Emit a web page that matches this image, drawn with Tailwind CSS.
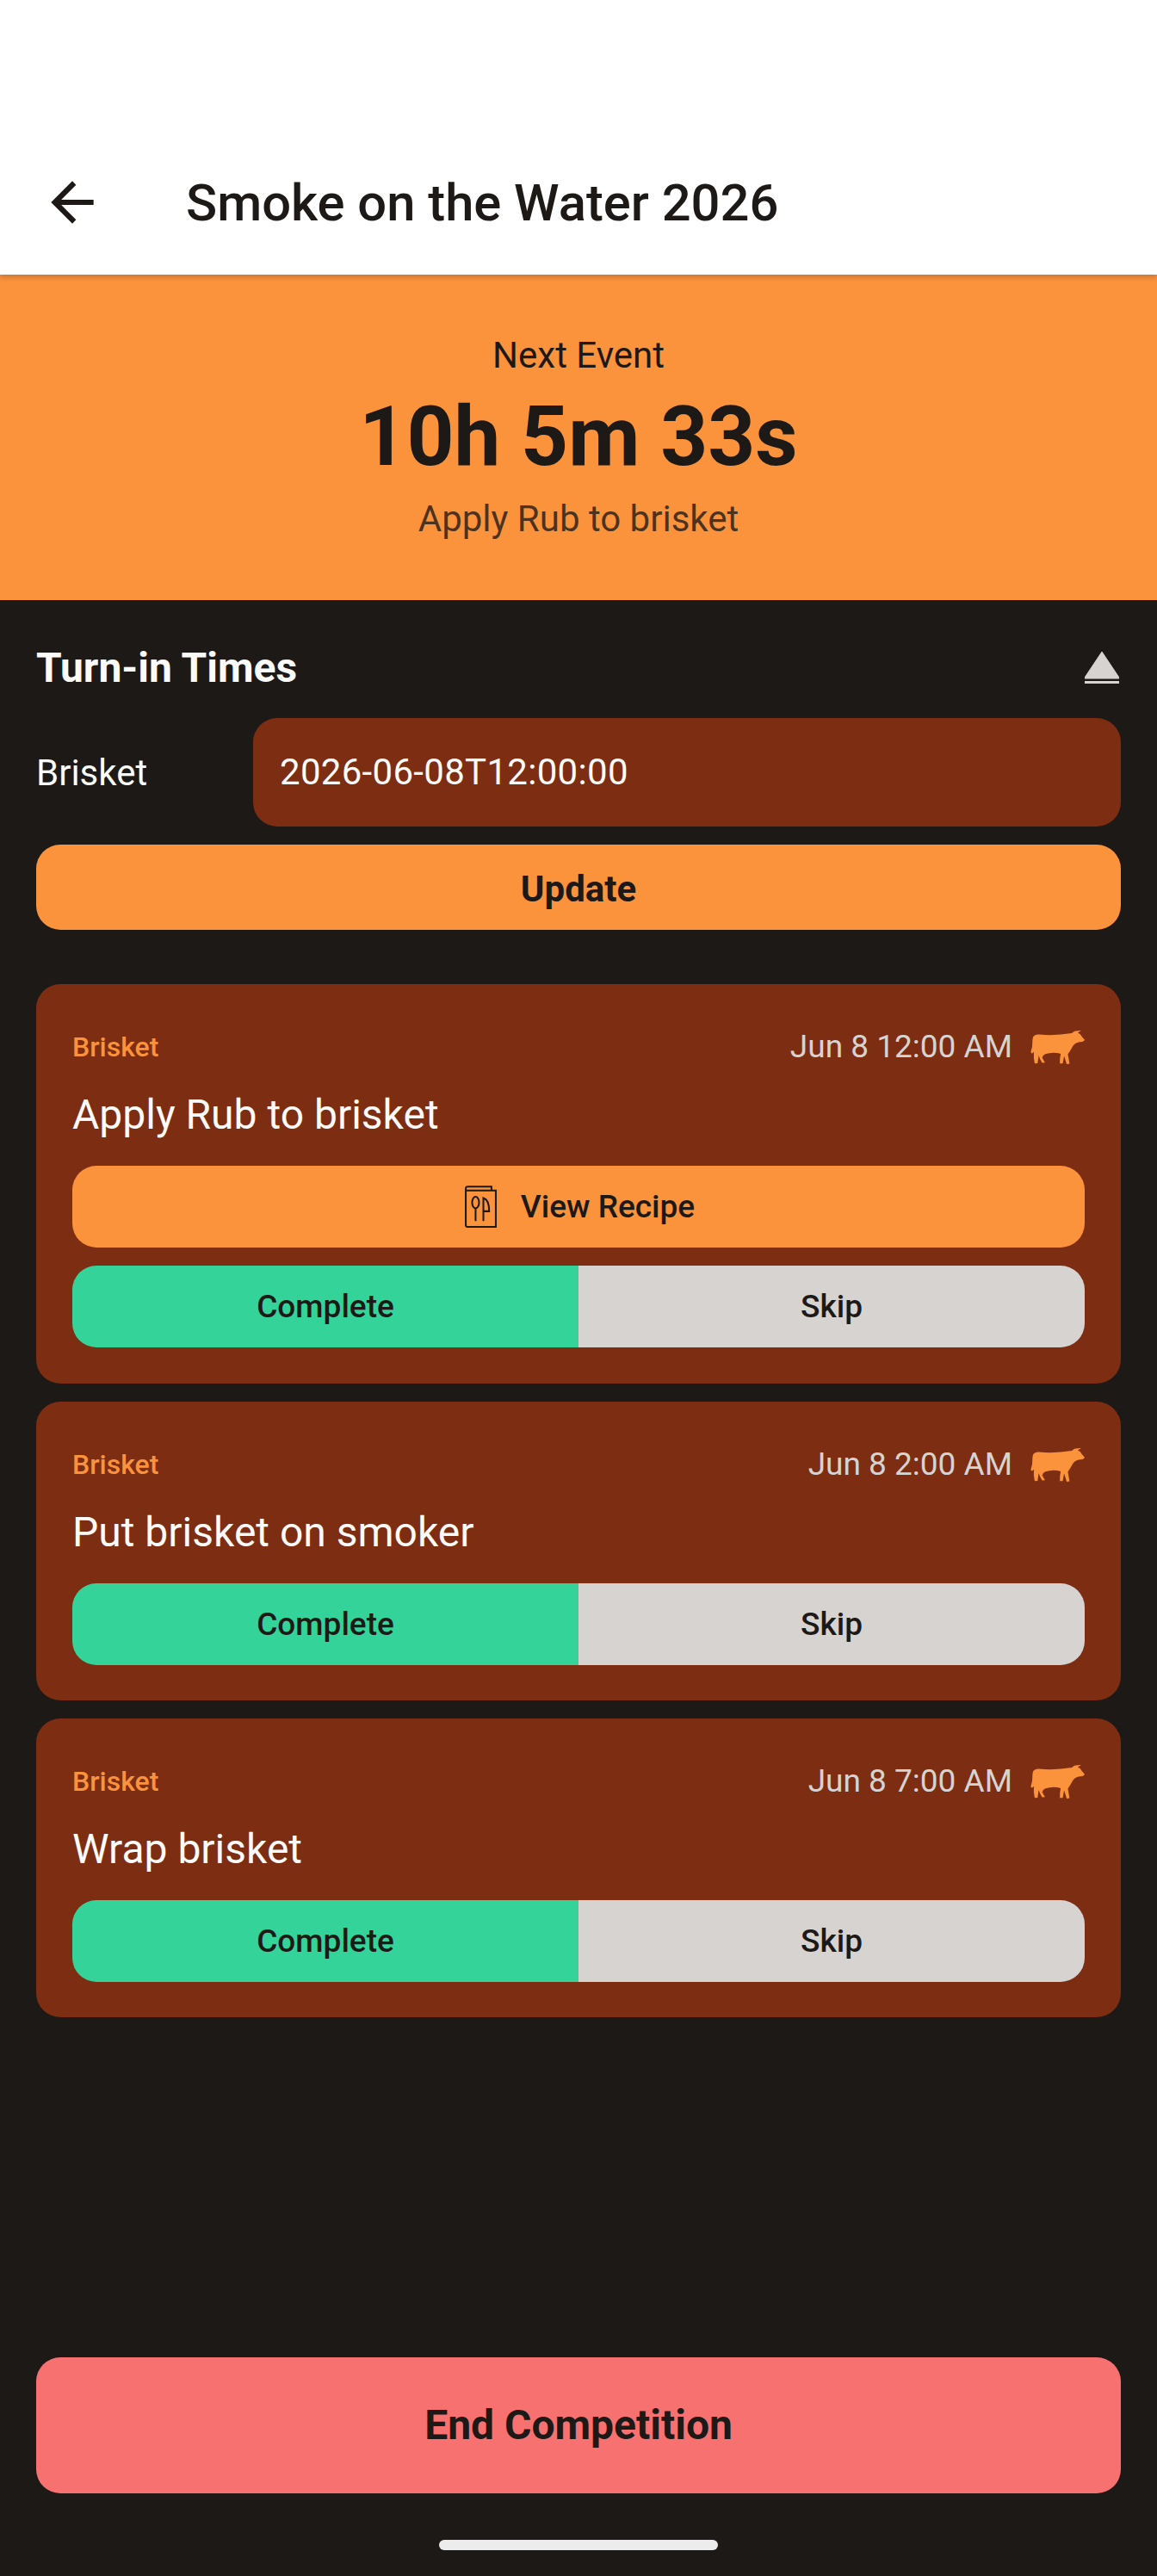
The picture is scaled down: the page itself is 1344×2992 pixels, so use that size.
<!DOCTYPE html>
<html lang="en">
<head>
    <meta charset="UTF-8">
    <meta name="viewport" content="width=device-width, initial-scale=1.0">
    <title>Smoke on the Water 2026</title>
    <script src="https://cdn.jsdelivr.net/npm/@tailwindcss/browser@4"></script>
</head>
<body class="font-['Roboto',sans-serif]">

<div class="flex flex-col h-[2992px] w-[1344px] bg-[#1c1917] text-[#1c1917] overflow-hidden">

    <!-- App bar -->
    <header class="relative z-10 flex items-center h-[319px] pt-[151px] pl-[47px] bg-white shadow-[0_3px_6px_rgba(0,0,0,0.2)]">
        <svg class="w-[74px] h-[74px]" viewBox="0 0 24 24" fill="#1c1917"><path d="M20 11H7.83l5.59-5.59L12 4l-8 8 8 8 1.41-1.41L7.83 13H20v-2z"/></svg>
        <h1 class="ml-[95px] mt-[2px] text-[59.7px] leading-[74px] font-medium">Smoke on the Water 2026</h1>
    </header>

    <!-- Next event -->
    <section class="flex flex-col items-center h-[378px] pt-[66px] bg-[#fb923c]">
        <p class="text-[42px] leading-[56px]">Next Event</p>
        <p class="mt-[10px] text-[96px] leading-[112px] font-bold">10h 5m 33s</p>
        <p class="mt-[12px] text-[42px] leading-[56px] text-[#1c1917]/80">Apply Rub to brisket</p>
    </section>

    <!-- Content -->
    <main class="flex flex-col flex-1 px-[42px]">
        <div class="flex items-center justify-between h-[74px] mt-[41px] pr-[2px]">
            <h2 class="mt-[2px] text-[48px] font-bold text-[#fafaf9]">Turn-in Times</h2>
            <svg class="w-[40px] h-[37px]" viewBox="0 0 40 37" fill="#d6d3d1"><path d="M20 0 L40 30 V31 H0 V30 Z" stroke="#d6d3d1" stroke-linejoin="round"/><rect x="0" y="34" width="40" height="3"/></svg>
        </div>

        <div class="flex items-center mt-[22px]">
            <label class="w-[252px] text-[42px] text-[#fafaf9]">Brisket</label>
            <div class="flex flex-1 items-center h-[126px] px-[31px] pb-[2px] rounded-[28px] bg-[#7c2d12] text-[42px] tracking-[0.3px] text-[#fafaf9]">2026-06-08T12:00:00</div>
        </div>

        <button class="h-[99px] mt-[21px] pt-[3px] rounded-[28px] bg-[#fb923c] text-[42px] font-bold">Update</button>

        <div class="flex flex-col gap-[21px] mt-[63px]">
            <!-- Event card -->
            <article class="flex flex-col p-[42px] rounded-[28px] bg-[#7c2d12]">
                <div class="flex items-center h-[62px]">
                    <span class="text-[32px] font-medium text-[#fb923c]">Brisket</span>
                    <span class="ml-auto text-[37px] text-[#d6d3d1]">Jun 8 12:00 AM</span>
                    <svg class="ml-[21px] w-[63px] h-[40px]" viewBox="50 50 190 120" fill="#fb923c"><path d="M60 74 Q66 65 80 66 Q130 72 195 62 L204 55 L228 52 L216 60 Q226 64 230 74 L240 85 Q236 93 222 93 Q205 96 198 108 Q190 124 181 136 L187 169 L177 170 Q172 155 168 142 L163 168 L153 168 Q152 150 156 134 Q130 126 102 135 Q92 140 91 148 L101 165 L91 166 Q82 152 79 140 L75 167 L65 168 Q60 150 62 127 L55 133 L51 128 Q58 110 57 90 Q57 80 60 74 Z"/></svg>
                </div>
                <p class="mt-[13px] text-[48px] leading-[69px] text-[#fafaf9]">Apply Rub to brisket</p>
                <button class="flex items-center justify-center gap-[27px] h-[95px] mt-[25px] pl-[2px] rounded-[28px] bg-[#fb923c] text-[37px] font-medium">
                    <svg class="w-[39px] h-[51px]" viewBox="120 78 116 152" fill="none" stroke="#1c1917" stroke-width="6"><path d="M215 98 V85 H133 Q126 85 126 92 V218 Q126 224 132 224 H230 V98 H126"/><ellipse cx="160" cy="140" rx="12" ry="20"/><path d="M160 160 V204 M187 204 V124 Q207 130 207 170 H187"/></svg>
                    View Recipe
                </button>
                <div class="flex h-[95px] mt-[21px] rounded-[28px] overflow-hidden text-[37px] font-medium">
                    <button class="flex-1 bg-[#34d399]">Complete</button>
                    <button class="flex-1 bg-[#d6d3d1]">Skip</button>
                </div>
            </article>

            <article class="flex flex-col px-[42px] pt-[42px] pb-[41px] rounded-[28px] bg-[#7c2d12]">
                <div class="flex items-center h-[62px]">
                    <span class="text-[32px] font-medium text-[#fb923c]">Brisket</span>
                    <span class="ml-auto text-[37px] text-[#d6d3d1]">Jun 8 2:00 AM</span>
                    <svg class="ml-[21px] w-[63px] h-[40px]" viewBox="50 50 190 120" fill="#fb923c"><path d="M60 74 Q66 65 80 66 Q130 72 195 62 L204 55 L228 52 L216 60 Q226 64 230 74 L240 85 Q236 93 222 93 Q205 96 198 108 Q190 124 181 136 L187 169 L177 170 Q172 155 168 142 L163 168 L153 168 Q152 150 156 134 Q130 126 102 135 Q92 140 91 148 L101 165 L91 166 Q82 152 79 140 L75 167 L65 168 Q60 150 62 127 L55 133 L51 128 Q58 110 57 90 Q57 80 60 74 Z"/></svg>
                </div>
                <p class="mt-[13px] text-[48px] leading-[69px] text-[#fafaf9]">Put brisket on smoker</p>
                <div class="flex h-[95px] mt-[25px] rounded-[28px] overflow-hidden text-[37px] font-medium">
                    <button class="flex-1 bg-[#34d399]">Complete</button>
                    <button class="flex-1 bg-[#d6d3d1]">Skip</button>
                </div>
            </article>

            <article class="flex flex-col px-[42px] pt-[42px] pb-[41px] rounded-[28px] bg-[#7c2d12]">
                <div class="flex items-center h-[62px]">
                    <span class="text-[32px] font-medium text-[#fb923c]">Brisket</span>
                    <span class="ml-auto text-[37px] text-[#d6d3d1]">Jun 8 7:00 AM</span>
                    <svg class="ml-[21px] w-[63px] h-[40px]" viewBox="50 50 190 120" fill="#fb923c"><path d="M60 74 Q66 65 80 66 Q130 72 195 62 L204 55 L228 52 L216 60 Q226 64 230 74 L240 85 Q236 93 222 93 Q205 96 198 108 Q190 124 181 136 L187 169 L177 170 Q172 155 168 142 L163 168 L153 168 Q152 150 156 134 Q130 126 102 135 Q92 140 91 148 L101 165 L91 166 Q82 152 79 140 L75 167 L65 168 Q60 150 62 127 L55 133 L51 128 Q58 110 57 90 Q57 80 60 74 Z"/></svg>
                </div>
                <p class="mt-[13px] text-[48px] leading-[69px] text-[#fafaf9]">Wrap brisket</p>
                <div class="flex h-[95px] mt-[25px] rounded-[28px] overflow-hidden text-[37px] font-medium">
                    <button class="flex-1 bg-[#34d399]">Complete</button>
                    <button class="flex-1 bg-[#d6d3d1]">Skip</button>
                </div>
            </article>
        </div>

        <button class="h-[158px] mt-auto rounded-[28px] bg-[#f87171] text-[48px] font-bold">End Competition</button>

        <!-- Gesture bar -->
        <div class="flex justify-center h-[96px] pt-[54px]">
            <div class="w-[324px] h-[12px] rounded-full bg-[#ececec]"></div>
        </div>
    </main>
</div>

</body>
</html>
